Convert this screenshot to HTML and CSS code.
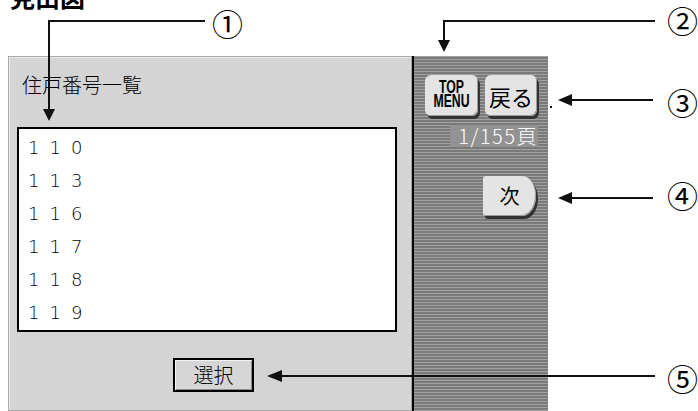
FILE: index.html
```html
<!DOCTYPE html>
<html lang="ja">
<head>
    <meta charset="UTF-8">
    <title>住戸番号一覧</title>
    <link rel="stylesheet" href="styles.css">
</head>
<body>
    <h1 class="caption">見出図</h1>

    <div class="screen">
        <div class="panel">
            <div class="panel-title">住戸番号一覧</div>
            <ul class="list">
                <li>110</li>
                <li>113</li>
                <li>116</li>
                <li>117</li>
                <li>118</li>
                <li>119</li>
            </ul>
            <button class="select-btn">選択</button>
        </div>
        <div class="divider"></div>
        <div class="side">
            <div class="side-buttons">
                <button class="key key-top"><span class="narrow">TOP<br>MENU</span></button>
                <button class="key key-back">戻る</button>
            </div>
            <div class="page-no">1/155頁</div>
            <button class="key key-next">次</button>
        </div>
    </div>

    <!-- callouts -->
    <svg class="callouts" width="698" height="411" viewBox="0 0 698 411">
        <g stroke="#111" stroke-width="2" fill="none">
            <polyline points="205,21 49,21 49,111"/>
            <polyline points="655,21 444,21 444,41"/>
            <line x1="570" y1="100" x2="653" y2="100"/>
            <line x1="570" y1="198" x2="653" y2="198"/>
            <line x1="280" y1="376" x2="655" y2="376"/>
        </g>
        <g fill="#111">
            <polygon points="43,109 55,109 49,121"/>
            <polygon points="438,40 450,40 444,52"/>
            <polygon points="558,100 572,94 572,106"/>
            <polygon points="558,198 572,192 572,204"/>
            <polygon points="267,376 282,370 282,382"/>
            <rect x="550" y="106" width="2" height="2"/>
        </g>
    </svg>
    <span class="num n1">①</span>
    <span class="num n2">②</span>
    <span class="num n3">③</span>
    <span class="num n4">④</span>
    <span class="num n5">⑤</span>
</body>
</html>
```

FILE: styles.css
```css
body {
    margin: 0;
    width: 698px;
    height: 411px;
    overflow: hidden;
    position: relative;
    background-color: #ffffff;
    font-family: "Noto Sans CJK JP", sans-serif;
    color: #000;
}

.caption {
    margin: -16px 0 0 10px;
    height: 24px;
    font-size: 25px;
    line-height: 24px;
    font-weight: bold;
}

.screen {
    display: flex;
    margin: 48px 0 0 8px;
    height: 355px;
    width: 540px;
}

.panel {
    width: 402px;
    height: 353px;
    background-color: #d4d4d4;
    border: 1px solid #a8a8a8;
    box-shadow: inset 1px 1px 0 #ececec;
}

.panel-title {
    margin: 16px 0 0 13px;
    font-size: 20px;
    line-height: 24px;
    font-weight: 300;
}

.list {
    list-style: none;
    margin: 30px 0 0 8px;
    padding: 2px 0 0 0;
    width: 376px;
    height: 199px;
    background-color: #ffffff;
    border: 2px solid #000;
}

.list li {
    height: 33px;
    line-height: 33px;
    padding-left: 9px;
    font-family: "DejaVu Sans", sans-serif;
    font-weight: 200;
    font-size: 18px;
    letter-spacing: 10px;
}

.select-btn {
    display: block;
    margin: 26px 0 0 164px;
    width: 81px;
    height: 34px;
    padding: 0;
    background-color: #d6d6d6;
    border: 2px solid #000;
    box-shadow: inset 1px 1px 0 #f4f4f4, inset -1px -1px 0 #8a8a8a;
    font-family: "Noto Sans CJK JP", sans-serif;
    font-weight: 300;
    font-size: 20px;
    line-height: 28px;
}

.divider {
    width: 2px;
    background-color: #000;
}

.side {
    width: 134px;
    background: repeating-linear-gradient(to bottom, #a2a2a2 0, #a2a2a2 1px, #7a7a7a 1px, #7a7a7a 3px);
    padding: 19px 0 0 11px;
    box-sizing: border-box;
}

.side-buttons {
    display: flex;
    gap: 7px;
}

.key {
    padding: 0;
    background-color: #e4e4e4;
    border: none;
    border-radius: 6px;
    box-shadow: 2px 3px 0 #333, inset -1px -1px 0 #9a9a9a;
    font-family: "Noto Sans CJK JP", sans-serif;
    color: #000;
}

.key-top {
    width: 53px;
    height: 41px;
}

.narrow {
    display: inline-block;
    font-family: "Liberation Sans", sans-serif;
    font-weight: bold;
    font-size: 18px;
    line-height: 14px;
    transform: scaleX(0.68);
}

.key-back {
    width: 52px;
    height: 41px;
    font-size: 22px;
    line-height: 38px;
}

.page-no {
    margin: 9px 0 0 25px;
    width: 88px;
    height: 22px;
    background-color: #929292;
    color: #ffffff;
    font-size: 20px;
    line-height: 22px;
    text-align: right;
    font-weight: 300;
    letter-spacing: 1.5px;
}

.key-next {
    display: block;
    margin: 29px 0 0 58px;
    width: 53px;
    height: 40px;
    border-radius: 3px 14px 14px 3px / 3px 50% 50% 3px;
    font-size: 20px;
    line-height: 38px;
}

.callouts {
    position: absolute;
    left: 0;
    top: 0;
}

.num {
    position: absolute;
    font-family: "Noto Sans CJK JP", sans-serif;
    font-size: 31px;
    line-height: 31px;
}

.n1 { left: 212px; top: 7px; }
.n2 { left: 667px; top: 4px; }
.n3 { left: 667px; top: 86px; }
.n4 { left: 667px; top: 179px; }
.n5 { left: 667px; top: 362px; }
```
